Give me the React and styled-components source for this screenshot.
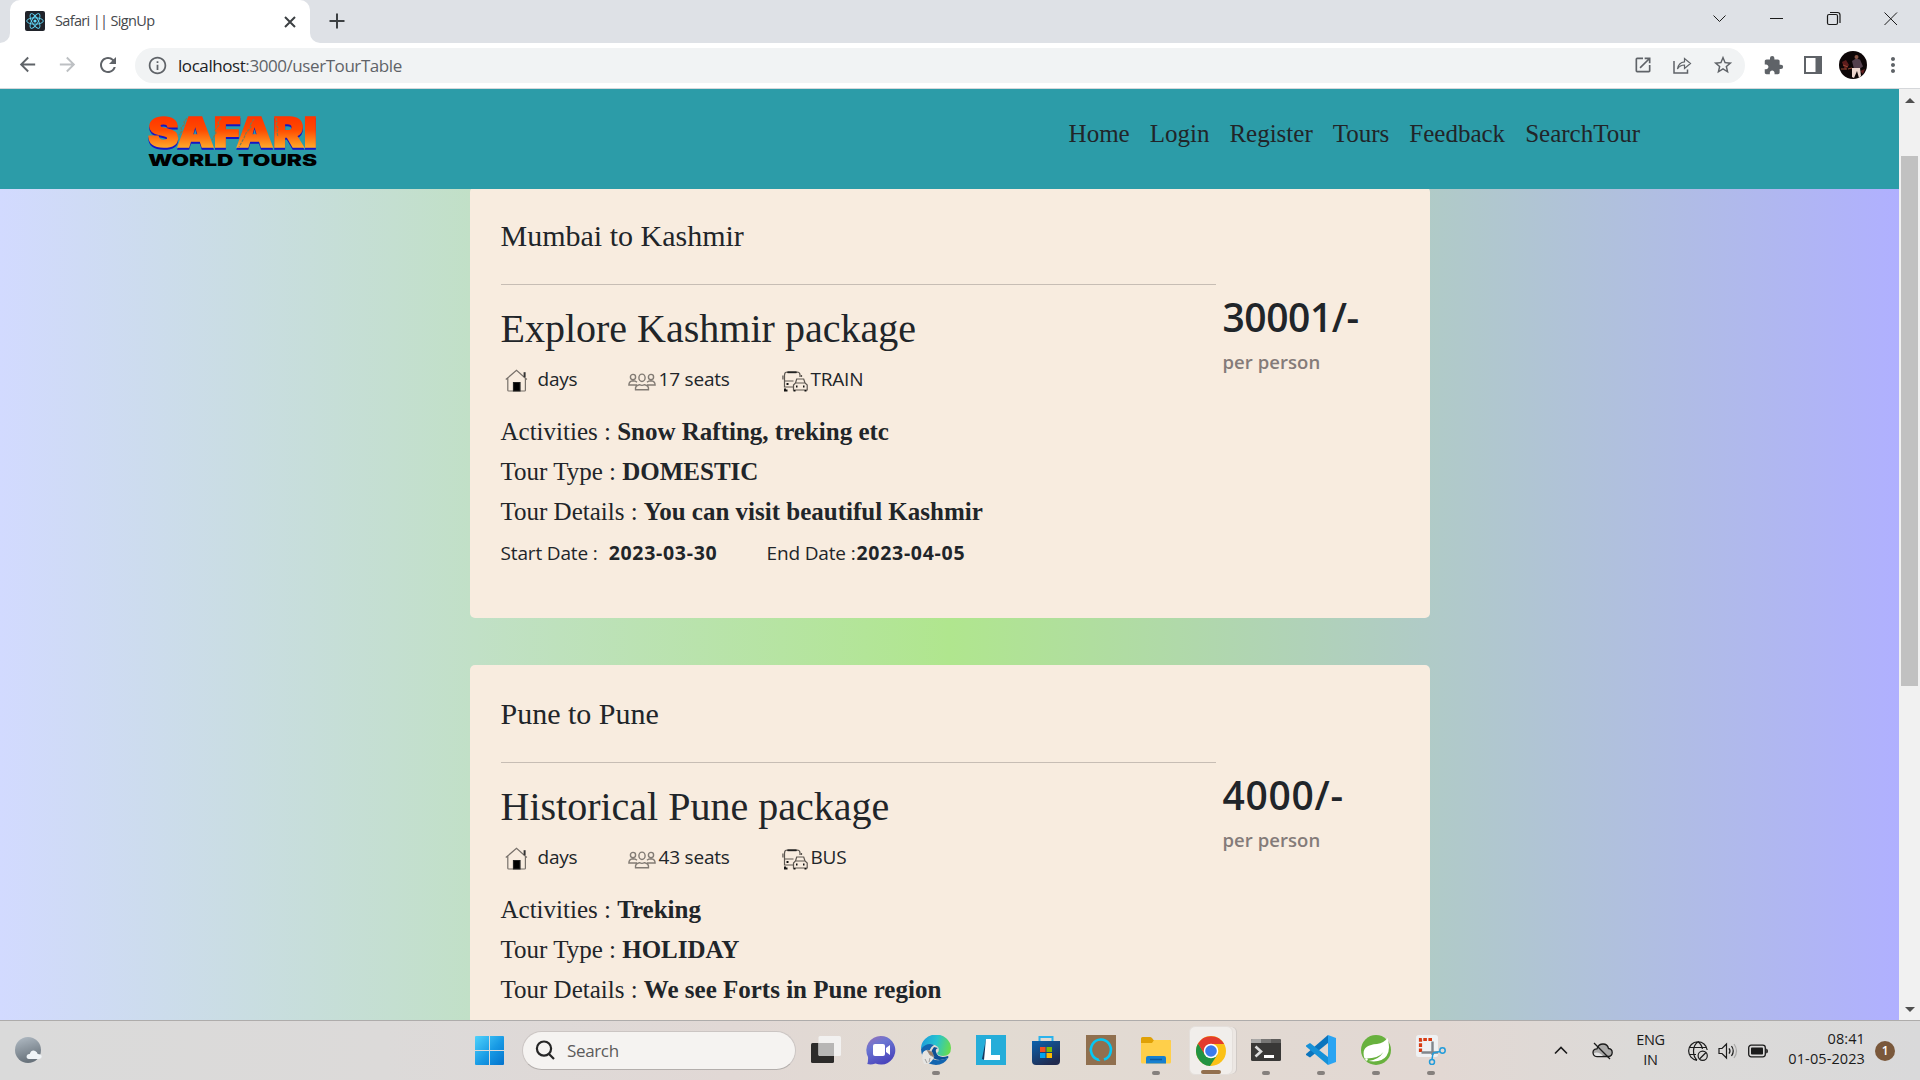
import React from "react";
import styled, { createGlobalStyle } from "styled-components";
import { MdOpenInNew, MdStarBorder, MdExtension, MdRefresh, MdArrowBack, MdArrowForward, MdInfoOutline, MdMoreVert } from "react-icons/md";

const sans = `"Open Sans", "Noto Sans", sans-serif`;
const serif = `"Liberation Serif", serif`;

const Global = createGlobalStyle`
  * { box-sizing: border-box; }
  body { margin: 0; overflow: hidden; }
  svg { display: block; flex: none; }
`;

const Screen = styled.div`
  width: 1920px;
  height: 1080px;
  display: flex;
  flex-direction: column;
  overflow: hidden;
  font-family: ${sans};
  color: #212529;
`;

/* ---------- browser chrome ---------- */
const TabStrip = styled.div`
  height: 43px;
  flex: none;
  background: #dee1e6;
  display: flex;
  align-items: stretch;
`;
const TabEdge = styled.div`
  width: 10px;
  background: #fff;
  &::before {
    content: "";
    display: block;
    height: 43px;
    background: #dee1e6;
    border-radius: ${(p) => (p.$left ? "0 0 10px 0" : "0 0 0 10px")};
  }
`;
const Tab = styled.div`
  width: 300px;
  height: 43px;
  padding: 0 14px 9px 15px;
  background: #fff;
  border-radius: 10px 10px 0 0;
  display: flex;
  align-items: center;
`;
const Favicon = styled.span`
  padding-top: 8px;
`;
const TabTitle = styled.span`
  flex: 1;
  margin-left: 10px;
  padding-top: 8px;
  font-size: 14.5px;
  line-height: 20px;
  letter-spacing: -0.65px;
  color: #45484c;
`;
const TabClose = styled.span`
  padding-top: 9px;
`;
const NewTab = styled.div`
  padding: 13px 0 0 9px;
`;
const WindowButtons = styled.div`
  margin-left: auto;
  padding: 11px 21px 0 0;
  display: flex;
  gap: 41px;
`;
const Toolbar = styled.div`
  height: 46px;
  flex: none;
  padding: 5px 0 6px 16px;
  background: #fff;
  border-bottom: 1px solid #d5d7da;
  display: flex;
  align-items: center;
  color: #5f6368;
`;
const NavIcons = styled.div`
  width: 119px;
  display: flex;
  gap: 17px;
`;
const Omnibox = styled.div`
  width: 1610px;
  height: 35px;
  padding: 0 11px 0 12px;
  border-radius: 18px;
  background: #f1f3f4;
  display: flex;
  align-items: center;
`;
const Url = styled.span`
  margin-left: 10px;
  padding-top: 1px;
  flex: 1;
  font-size: 17px;
  line-height: 24px;
  letter-spacing: -0.43px;
  color: #5f6368;
`;
const Host = styled.span`
  color: #202124;
`;
const OmniActions = styled.div`
  display: flex;
  align-items: center;
  gap: 20px;
`;
const ToolActions = styled.div`
  flex: 1;
  padding-left: 8px;
  display: grid;
  grid-template-columns: repeat(4, 40px);
  place-items: center;
`;

/* ---------- page ---------- */
const Viewport = styled.div`
  height: 931px;
  flex: none;
  display: flex;
`;
const Page = styled.div`
  width: 1899px;
  display: flex;
  flex-direction: column;
  overflow: hidden;
  background: linear-gradient(90deg, #d2daff 0%, #b0e68e 50%, #b0b0ff 100%);
`;
const Header = styled.header`
  height: 100px;
  flex: none;
  padding: 0 259px 0 144px;
  background: #2c9ca8;
  display: flex;
  justify-content: space-between;
  z-index: 1;
`;
const LogoWrap = styled.div`
  padding-top: 4px;
`;
const Menu = styled.nav`
  padding-top: 30px;
  display: flex;
  gap: 20px;
  font: 25px/30px ${serif};
`;
const Cards = styled.main`
  flex: 1;
  min-height: 0;
  margin-top: -2px;
  display: flex;
  flex-direction: column;
  align-items: center;
  gap: 47px;
`;
const Card = styled.article`
  width: 960px;
  height: 431px;
  flex: none;
  padding: 31px 31px 0;
  border-radius: 5px;
  background: #f8ecdf;
  display: flex;
`;
const Details = styled.div`
  width: 715px;
`;
const Route = styled.h4`
  margin: 0;
  padding-bottom: 30px;
  border-bottom: 1px solid #c7bdb4;
  font: 400 30px/36px ${serif};
`;
const PackageName = styled.h2`
  margin: 20px 0 11px;
  font: 400 40px/48px ${serif};
`;
const MetaRow = styled.div`
  height: 30px;
  margin-bottom: 23px;
  display: flex;
`;
const Meta = styled.div`
  width: ${(p) => p.$w}px;
  padding-left: ${(p) => p.$pad}px;
  display: flex;
  font-size: 19px;
  line-height: 30px;
  letter-spacing: -0.2px;
`;
const MetaIcon = styled.span`
  padding-top: ${(p) => p.$top}px;
`;
const MetaText = styled.span`
  margin-left: ${(p) => p.$gap}px;
`;
const Fact = styled.p`
  margin: 0 0 10px;
  font: 400 25px/30px ${serif};
`;
const Dates = styled.div`
  display: flex;
  padding-top: 1px;
  font-size: 19px;
  line-height: 30px;
  letter-spacing: -0.15px;
`;
const DateItem = styled.div`
  width: ${(p) => p.$w}px;
  display: flex;
  gap: ${(p) => p.$gap}px;
  white-space: nowrap;
`;
const Strong = styled.b`
  font-size: 19.5px;
  letter-spacing: 0.7px;
`;
const PriceCol = styled.div`
  padding: 75px 0 0 7px;
`;
const Price = styled.div`
  font-size: 39px;
  font-weight: 600;
  line-height: 48px;
  letter-spacing: ${(p) => p.$track}px;
`;
const PerPerson = styled.div`
  margin-top: 6px;
  font-size: 18.5px;
  font-weight: 600;
  line-height: 30px;
  letter-spacing: 0.05px;
  color: #847b79;
`;
const Scrollbar = styled.div`
  width: 21px;
  padding: 9px 0 8px;
  background: #f1f1f1;
  display: flex;
  flex-direction: column;
  align-items: center;
`;
const Arrow = styled.div`
  width: 0;
  height: 0;
  border: 5px solid transparent;
  border-top: ${(p) => (p.$down ? "5px solid #505050" : "0")};
  border-bottom: ${(p) => (p.$down ? "0" : "5px solid #505050")};
`;
const Thumb = styled.div`
  width: 17px;
  height: 530px;
  margin: 53px 0 auto;
  background: #c1c1c1;
`;

/* ---------- taskbar ---------- */
const Taskbar = styled.footer`
  height: 60px;
  flex: none;
  padding: 0 25px 0 14px;
  border-top: 1px solid #aeacab;
  background: linear-gradient(90deg, #dadada 0%, #dcdad9 20%, #e1d8d5 38%, #e2dbd2 50%, #e2d8d3 75%, #dcdad8 85%, #d9d9da 100%);
  display: flex;
  align-items: center;
`;
const Weather = styled.div`
  width: 461px;
  padding-bottom: 2px;
`;
const SearchBox = styled.div`
  width: 274px;
  height: 39px;
  margin: -1px 2px 0 18px;
  padding-left: 12px;
  border: 1px solid #cbc5c3;
  border-bottom-color: #b3aeac;
  border-radius: 20px;
  background: #f5f3f1;
  display: flex;
  align-items: center;
  gap: 12px;
  font-size: 17px;
  letter-spacing: -0.35px;
  color: #5c5b5a;
`;
const Apps = styled.div`
  display: flex;
`;
const AppButton = styled.div`
  width: 55px;
  height: 59px;
  padding: 14px 0 5px;
  display: flex;
  flex-direction: column;
  align-items: center;
  justify-content: space-between;
`;
const ActiveApp = styled(AppButton)`
  width: 44px;
  height: 49px;
  margin: 5px 5px 5px 6px;
  padding: 9px 0 0;
  border: 1px solid #e4dfdb;
  border-radius: 6px;
  background: #f1eeeb;
  box-shadow: 4px 0 0 -1px #ece7e3, 5px 0 0 -1px #cfc9c5;
`;
const Indicator = styled.i`
  width: ${(p) => (p.$state === "active" ? 20 : 8)}px;
  height: 4px;
  flex: none;
  border-radius: 2px;
  background: ${(p) => ({ none: "transparent", active: "#93704f", open: "#85807d" })[p.$state]};
`;
const Tray = styled.div`
  margin-left: auto;
  display: flex;
  align-items: center;
  font-size: 14.5px;
  line-height: 20px;
  letter-spacing: -0.3px;
  color: #1b1b1b;
`;
const CloudSlot = styled.div`
  margin-left: 24px;
`;
const Lang = styled.div`
  width: 75px;
  padding-bottom: 2px;
  text-align: center;
`;
const Clock = styled.div`
  width: 87px;
  margin: 0 10px;
  padding-bottom: 3px;
  text-align: right;
  letter-spacing: 0.1px;
`;
const Badge = styled.div`
  width: 20px;
  height: 20px;
  border-radius: 50%;
  background: #7a583b;
  color: #fff;
  font-size: 12px;
  font-weight: 600;
  text-align: center;
`;
const Quick = styled.div`
  display: flex;
  align-items: center;
  gap: 10px;
`;

/* ---------- drawings ---------- */
const ReactIcon = () => (
  <svg width="20" height="20" viewBox="0 0 20 20">
    <rect width="20" height="20" rx="2" fill="#20232a" />
    <g fill="none" stroke="#61dafb" strokeWidth="0.9">
      <ellipse cx="10" cy="10" rx="8.3" ry="3.2" />
      <ellipse cx="10" cy="10" rx="8.3" ry="3.2" transform="rotate(60 10 10)" />
      <ellipse cx="10" cy="10" rx="8.3" ry="3.2" transform="rotate(120 10 10)" />
    </g>
    <circle cx="10" cy="10" r="1.6" fill="#61dafb" />
  </svg>
);
const Line = ({ w, h, d, sw = 1, color = "#1b1b1b" }) => (
  <svg width={w} height={h} viewBox={`0 0 ${w} ${h}`} fill="none" stroke={color} strokeWidth={sw}>
    <path d={d} />
  </svg>
);
const SafariLogo = () => (
  <svg width="178" height="84" viewBox="0 -20 178 84">
    <defs>
      <linearGradient id="fire" gradientUnits="userSpaceOnUse" x1="0" y1="4" x2="0" y2="36">
        <stop offset="0" stopColor="#ff3500" />
        <stop offset="0.4" stopColor="#ff4a00" />
        <stop offset="1" stopColor="#ffb02c" />
      </linearGradient>
    </defs>
    <g style={{ filter: "drop-shadow(0 2px 0 #1616c4)" }}>
      <text x="4" y="34.3" fontFamily="Inter, sans-serif" fontWeight="900" fontSize="40.5" textLength="169" lengthAdjust="spacingAndGlyphs" fill="url(#fire)" stroke="url(#fire)" strokeWidth="1.6">SAFARI</text>
    </g>
    <path d="M43 5l-3 4 1 2-4 4 1 3-3 4M77 5l-3 5 1 2-4 5 1 3-4 7M110 6l-4 6 1 2-5 6-2 5-5 9M132 5l1 4-1 3 2 3-1 4 1 5" fill="none" stroke="#7d7a52" strokeWidth="1.2" strokeDasharray="3 1" />
    <text x="4" y="52.6" fontFamily="Inter, sans-serif" fontWeight="900" fontSize="16" textLength="169" lengthAdjust="spacingAndGlyphs" fill="#000">WORLD TOURS</text>
  </svg>
);
const House = () => (
  <svg width="23" height="23" viewBox="0 0 23 23" fill="none" stroke="#77706a" strokeWidth="1.2">
    <path d="M.8 10.5L11.5 1.4l10.4 9.1M2.8 9v12.2q0 .8 1 .8h15.600q1 0 1-.8V9" />
    <path d="M19.600 3.200v5" stroke="#333" strokeWidth="2" />
    <path d="M8.500 13.500h6.500V22H8.500z" fill="#000" stroke="#222" />
  </svg>
);
const People = () => (
  <svg width="28" height="18" viewBox="0 0 28 18" fill="none" stroke="#827b74" strokeWidth="1.4">
    <circle cx="5" cy="4" r="2.600" />
    <circle cx="23" cy="4" r="2.600" />
    <ellipse cx="14" cy="4.800" rx="3.100" ry="3.700" />
    <path d="M9 12H.9q0-3.800 4.100-4.200 2.500 0 4 1.500M19 12h8.100q0-3.800-4.100-4.200-2.500 0-4 1.500M7.500 16.700q-.5-4.300 4-5 2.500 1.300 5 0 4.500.7 4 5z" />
  </svg>
);
const Bus = () => (
  <svg width="26" height="22" viewBox="0 0 26 22" fill="none" stroke="#5c5650" strokeWidth="1.2">
    <path d="M11 17H2.500V5q0-3 3-3h9.500q3 0 3 3v2M2.500 11h9M.9 5.500v4M19.500 5v2M5 2.500h10" />
    <path d="M11.500 20v-5l2-2 1.200-4h7l1.300 4 2.200 2v5zM14 13h9" />
    <path d="M4.500 14h2M14 16.500h1.500M21 16.500h1.500M3 18.500v2h2.500M12.500 20v1.500M23.500 20v1.500" stroke="#111" strokeWidth="2" />
    <path d="M5.500 2.300h9" stroke="#222" strokeWidth="1.800" />
  </svg>
);
const Share = () => (
  <svg width="19" height="17" viewBox="0 0 19 17" fill="none" stroke="#5f6368" strokeWidth="1.500">
    <path d="M1 4v12h13.500v-3.500" />
    <path d="M4.500 12Q5.500 5.300 11.500 4.800V1.500l6 5-6 5V8Q7 8 4.500 12z" strokeWidth="1.200" />
  </svg>
);
const SidePanel = () => (
  <svg width="18" height="18" viewBox="0 0 18 18">
    <path d="M0 0h18v18H0z" fill="#5f6368" />
    <path d="M2 2h9.500v14H2z" fill="#fff" />
  </svg>
);
const Avatar = () => (
  <svg width="28" height="28" viewBox="0 0 28 28">
    <circle cx="14" cy="14" r="14" fill="#0d0607" />
    <path d="M3 11l4-2 3 5-4 5zM21 20l5-2-2 5z" fill="#5e1c1c" />
    <path d="M4 14l5 2M9 18l4-1M2 18h6" stroke="#9a4a35" strokeWidth="1" />
    <path d="M13 10l4-2.500 4 1 3 7-3 2-6 .5z" fill="#54404d" />
    <circle cx="17.500" cy="6" r="2" fill="#8a5748" />
    <path d="M13 17h8l1 8-2 2-2-7-3 7-2-1z" fill="#ecd6ce" />
  </svg>
);
const Moon = () => (
  <svg width="29" height="28" viewBox="0 0 29 28">
    <defs><linearGradient id="moon" x1="0" y1="0" x2="0.300" y2="1"><stop stopColor="#b3bdc6" /><stop offset="1" stopColor="#69737c" /></linearGradient></defs>
    <circle cx="14" cy="14" r="13" fill="url(#moon)" />
    <path d="M15 23q-3-.5-2.300-3.300.8-2 3-1.600 1.500-4.500 5.500-3.200 2 .7 2.500 3.200 4 0 4 2.700 0 2-2.700 2.200z" fill="#f0f4f7" />
  </svg>
);
const WinLogo = () => (
  <svg width="29" height="29" viewBox="0 0 29 29">
    <defs><linearGradient id="win" x1="0" y1="0" x2="1" y2="1"><stop stopColor="#4fd2fb" /><stop offset="0.550" stopColor="#1799e4" /><stop offset="1" stopColor="#0372cc" /></linearGradient></defs>
    <path d="M1 0h13v14H0V1q0-1 1-1zM15 0h13q1 0 1 1v13H15zM0 15h14v14H1q-1 0-1-1zM15 15h14v13q0 1-1 1H15z" fill="url(#win)" />
  </svg>
);
const TaskView = () => (
  <svg width="30" height="30" viewBox="0 0 30 30">
    <rect x="0" y="8" width="23" height="20" rx="1.500" fill="#2c2b2a" />
    <rect x="7.500" y="1" width="22.500" height="20" rx="1.500" fill="#f2f1f0" />
    <path d="M7.500 8H23v13H9q-1.500 0-1.500-1.500z" fill="#b7b6b5" />
  </svg>
);
const Chat = () => (
  <svg width="30" height="30" viewBox="0 0 30 30">
    <defs><linearGradient id="chat" x1="0" y1="0" x2="0.500" y2="1"><stop stopColor="#9a70b5" /><stop offset="0.400" stopColor="#6a75d2" /><stop offset="1" stopColor="#4b46bd" /></linearGradient></defs>
    <path d="M15 1a14.300 14.300 0 1 1-5.500 27.500Q5 30 1.300 29q1-3 .7-7A14.300 14.300 0 0 1 15 1z" fill="url(#chat)" />
    <rect x="7" y="9" width="12" height="12" rx="2" fill="#fff" />
    <path d="M20 13l4-3v10l-4-3z" fill="#fff" />
  </svg>
);
const Edge = () => (
  <svg width="30" height="30" viewBox="0 0 30 30">
    <defs>
      <linearGradient id="edgeTop" x1="0" y1="0.300" x2="1" y2="0.500"><stop stopColor="#1c9cdc" /><stop offset="0.500" stopColor="#27c3cf" /><stop offset="1" stopColor="#67dc4f" /></linearGradient>
    </defs>
    <path d="M0 14A15 14 0 0 1 30 13q0 8-8 8-5 0-6-3 3-2 1-6Q11 6 0 14z" fill="url(#edgeTop)" />
    <path d="M0 14Q6 7 13 10 6 14 10 22q4 6 17 1-4 7-12 7Q1 29 0 14z" fill="#1265b0" />
    <path d="M13 12q-5 6-1 11 6 4 15 0 1-1 0-2-10 3-12-4-1-3 2-4z" fill="#0c4f96" />
    <path d="M1 20q1-5 6-5 4 0 4 4l2 3q-3 8-10 7-2-4-2-9z" fill="#e6e5e2" />
    <path d="M6 15l5 2 2 5-4-2zM4 24l2 4M9 23l-1 4" fill="#9d7a60" stroke="#8d8d8d" strokeWidth=".8" />
  </svg>
);
const LTile = () => (
  <svg width="30" height="30" viewBox="0 0 30 30">
    <path d="M0 0h30v30H0z" fill="#25add9" />
    <path d="M10 4L6 24l3 1z" fill="#16385f" />
    <path d="M10 4h5v16h9v5H8z" fill="#fff" />
  </svg>
);
const Store = () => (
  <svg width="30" height="30" viewBox="0 0 30 30">
    <defs><linearGradient id="store" x1="0" y1="0" x2="0.600" y2="1"><stop stopColor="#0b62ae" /><stop offset="1" stopColor="#212b4f" /></linearGradient></defs>
    <path d="M8.500 7V2h13v5" fill="none" stroke="#2cb3ec" strokeWidth="2" />
    <path d="M1 6h28v20q0 4-4 4H5q-4 0-4-4z" fill="url(#store)" />
    <path d="M9 12h5.500v5H9z" fill="#f25022" /><path d="M15.500 12H21v5h-5.500z" fill="#7fba00" />
    <path d="M9 18h5.500v5H9z" fill="#00a4ef" /><path d="M15.500 18H21v5h-5.500z" fill="#ffb900" />
  </svg>
);
const Alexa = () => (
  <svg width="30" height="30" viewBox="0 0 30 30">
    <path d="M0 0h30v30H0z" fill="#90704f" />
    <path d="M12.500 24.800A10 10.300 0 1 1 18 24.600" fill="none" stroke="#05c8f5" strokeWidth="2.600" />
    <path d="M11 23.500q2 .2 3.500 2.500-3 .5-4-1z" fill="#05c8f5" />
  </svg>
);
const Folder = () => (
  <svg width="30" height="30" viewBox="0 0 30 30">
    <path d="M0 3.500Q0 2 1.500 2H9q1 0 2 1l1.500 2H28q2 0 2 2v3H0z" fill="#e0a106" />
    <path d="M0 8h11l2-3h15.500Q30 5 30 6.500V27q0 1.500-1.500 1.500h-27Q0 28.500 0 27z" fill="#ffcf4a" />
    <path d="M5 28.500V23q0-2 2-2h16q2 0 2 2v5.500z" fill="#1780cf" />
    <path d="M9 24.500h12" stroke="#0c5a9e" strokeWidth="1.500" />
  </svg>
);
const Chrome = () => (
  <svg width="30" height="30" viewBox="0 0 30 30">
    <circle cx="15" cy="15" r="15" fill="#fbc116" />
    <path d="M2 7.500A15 15 0 0 0 14 30L21.500 18.500 9 18z" fill="#229342" />
    <path d="M2 7.500A15 15 0 0 1 28.100 8H15L8.700 18.600z" fill="#e33b2e" />
    <circle cx="15" cy="15" r="7.300" fill="#fff" />
    <circle cx="15" cy="15" r="5.800" fill="#3b7bec" />
  </svg>
);
const Terminal = () => (
  <svg width="30" height="30" viewBox="0 0 30 30">
    <rect y="4" width="30" height="22" rx="1.500" fill="#393837" />
    <path d="M1.500 4H10v4H0V5.500Q0 4 1.500 4z" fill="#a9a8a7" /><path d="M10 4h10v4H10z" fill="#777675" /><path d="M20 4h8.500Q30 4 30 5.500V8H20z" fill="#5c5b5a" />
    <path d="M4.500 11.500l5.500 5-5.500 5" fill="none" stroke="#dcdcdc" strokeWidth="2.600" /><path d="M13 20h10v3H13z" fill="#fff" />
  </svg>
);
const VSCode = () => (
  <svg width="30" height="30" viewBox="0 0 30 30">
    <path d="M22 0l8 3v24l-8 3z" fill="#2aa4f2" />
    <path d="M22 0v8L4 22.500 0 20v-1z" fill="#0b74bd" />
    <path d="M22 30v-8L4 8 0 10.500v1z" fill="#1691d8" />
  </svg>
);
const Spring = () => (
  <svg width="30" height="30" viewBox="0 0 30 30">
    <circle cx="15" cy="15" r="15" fill="#68b13e" />
    <path d="M26.500 3q3.500 12-1 18-5 7-18 5 10-1 15-9Q17 24 3.500 23.500-1 10 16 9q7-1 10.500-6z" fill="#fff" />
    <circle cx="5.500" cy="24.500" r="1.200" fill="#fff" />
  </svg>
);
const Snip = () => (
  <svg width="30" height="30" viewBox="0 0 30 30">
    <rect width="22" height="22" rx="2.500" fill="#eff1f3" />
    <path d="M16 4.500H4.500V17" fill="none" stroke="#d83b12" strokeWidth="3.200" strokeDasharray="3.600 1.500" />
    <path d="M16.500 6.500V20M5.500 17.500H22" stroke="#81868c" strokeWidth="2.400" />
    <circle cx="26.500" cy="15.500" r="2.700" fill="none" stroke="#239cda" strokeWidth="1.500" />
    <circle cx="16" cy="27" r="2.500" fill="none" stroke="#239cda" strokeWidth="1.500" />
    <path d="M17 18l7-1.500M17 18l-1 6.500" stroke="#239cda" strokeWidth="1.500" />
  </svg>
);
const CloudOff = () => (
  <svg width="21" height="18" viewBox="0 0 21 18" fill="none" stroke="#1b1b1b" strokeWidth="1.300">
    <path d="M5 14.500Q1 14 1 10.500 1 7 5 6.800 6.500 2 11 2q4.500 0 5.500 4.500 3.700.5 3.700 4t-3.700 4z" fill="#aaa9a8" />
    <path d="M2 11q5-2 9 3H5q-3 0-3-3z" fill="#e4e4e4" stroke="none" />
    <path d="M2 1l16 16" />
  </svg>
);
const Globe = () => (
  <svg width="20" height="20" viewBox="0 0 20 20" fill="none" stroke="#1b1b1b" strokeWidth="1.200">
    <path d="M9 19.300A9.300 9.300 0 1 1 19.200 9M1.500 6.500h17M1.500 13.500H8M10 .7Q5.500 4 5.500 10T9 19M10 .7q4 3 4.400 7.300" />
    <circle cx="14.700" cy="14.700" r="4.600" /><path d="M11.500 18l6.500-6.500" />
  </svg>
);
const Speaker = () => (
  <svg width="20" height="18" viewBox="0 0 20 18" fill="none" stroke="#1b1b1b" strokeWidth="1.200">
    <path d="M1 6.500h3L8.500 2v14L4 11.500H1zM11 6.300q2 2.700 0 5.400M13.500 4q3.500 5 0 10" />
    <path d="M16 2q5 7 0 14" stroke="#a9a8a7" />
  </svg>
);
const Battery = () => (
  <svg width="20" height="14" viewBox="0 0 20 14">
    <rect x=".7" y="1.200" width="16.600" height="11.600" rx="2.500" fill="none" stroke="#1b1b1b" strokeWidth="1.300" />
    <rect x="3" y="3.500" width="12" height="7" rx=".8" fill="#1b1b1b" /><path d="M18.200 4.500q1.800.5 1.800 2.500t-1.800 2.500z" fill="#1b1b1b" />
  </svg>
);

const menu = ["Home", "Login", "Register", "Tours", "Feedback", "SearchTour"];
const tours = [
  { route: "Mumbai to Kashmir", name: "Explore Kashmir package", seats: "17 seats", by: "TRAIN", activities: "Snow Rafting, treking etc", type: "DOMESTIC", details: "You can visit beautiful Kashmir", start: "2023-03-30", end: "2023-04-05", price: "30001/-", track: -0.45 },
  { route: "Pune to Pune", name: "Historical Pune package", seats: "43 seats", by: "BUS", activities: "Treking", type: "HOLIDAY", details: "We see Forts in Pune region", price: "4000/-", track: 0.7 },
];
const apps = [
  [TaskView, "none"], [Chat, "none"], [Edge, "open"], [LTile, "none"], [Store, "none"], [Alexa, "none"],
  [Folder, "open"], [Chrome, "active"], [Terminal, "open"], [VSCode, "open"], [Spring, "open"], [Snip, "open"],
];

const TourCard = ({ tour }) => (
  <Card>
    <Details>
      <Route>{tour.route}</Route>
      <PackageName>{tour.name}</PackageName>
      <MetaRow>
        <Meta $w={127} $pad={4}><MetaIcon $top={5}><House /></MetaIcon><MetaText $gap={10}>days</MetaText></Meta>
        <Meta $w={154} $pad={0}><MetaIcon $top={9}><People /></MetaIcon><MetaText $gap={3}>{tour.seats}</MetaText></Meta>
        <Meta $w={150} $pad={0}><MetaIcon $top={6}><Bus /></MetaIcon><MetaText $gap={3}>{tour.by}</MetaText></Meta>
      </MetaRow>
      <Fact>Activities : <b>{tour.activities}</b></Fact>
      <Fact>Tour Type : <b>{tour.type}</b></Fact>
      <Fact>Tour Details : <b>{tour.details}</b></Fact>
      {tour.start && (
        <Dates>
          <DateItem $w={266} $gap={11}>Start Date : <Strong>{tour.start}</Strong></DateItem>
          <DateItem $w={260} $gap={1}>End Date :<Strong>{tour.end}</Strong></DateItem>
        </Dates>
      )}
    </Details>
    <PriceCol>
      <Price $track={tour.track}>{tour.price}</Price>
      <PerPerson>per person</PerPerson>
    </PriceCol>
  </Card>
);

export default function App() {
  return (
    <Screen>
      <Global />
      <TabStrip>
        <TabEdge $left />
        <Tab>
          <Favicon><ReactIcon /></Favicon>
          <TabTitle>Safari || SignUp</TabTitle>
          <TabClose><Line w={12} h={12} sw={2} color="#3c4043" d="M1 1l10 10M11 1L1 11" /></TabClose>
        </Tab>
        <TabEdge />
        <NewTab><Line w={16} h={16} sw={2} color="#3c4043" d="M8 .5v15M.5 8h15" /></NewTab>
        <WindowButtons>
          <Line w={16} h={16} d="M1.500 4.500l6 6 6-6" />
          <Line w={16} h={16} d="M1 7.500h13" />
          <Line w={16} h={16} sw={1.2} d="M1.500 5q0-1.500 1.500-1.500h7q1.500 0 1.500 1.500v7q0 1.500-1.500 1.500H3q-1.500 0-1.500-1.500zM4 1.500h7.500q2.500 0 2.500 2.500V12" />
          <Line w={16} h={16} d="M1.500 1.500l12.500 12.500M14 1.500L1.500 14" />
        </WindowButtons>
      </TabStrip>
      <Toolbar>
        <NavIcons>
          <MdArrowBack size={23} /><MdArrowForward size={23} color="#bdc0c3" /><MdRefresh size={24} />
        </NavIcons>
        <Omnibox>
          <MdInfoOutline size={21} />
          <Url><Host>localhost</Host>:3000/userTourTable</Url>
          <OmniActions>
            <MdOpenInNew size={20} /><Share /><MdStarBorder size={22} />
          </OmniActions>
        </Omnibox>
        <ToolActions>
          <MdExtension size={21} /><SidePanel /><Avatar /><MdMoreVert size={24} />
        </ToolActions>
      </Toolbar>
      <Viewport>
        <Page>
          <Header>
            <LogoWrap><SafariLogo /></LogoWrap>
            <Menu>{menu.map((m) => <span key={m}>{m}</span>)}</Menu>
          </Header>
          <Cards>{tours.map((t) => <TourCard key={t.name} tour={t} />)}</Cards>
        </Page>
        <Scrollbar><Arrow /><Thumb /><Arrow $down /></Scrollbar>
      </Viewport>
      <Taskbar>
        <Weather><Moon /></Weather>
        <WinLogo />
        <SearchBox>
          <Line w={20} h={20} sw={2.2} color="#262626" d="M9 1.500a7 7 0 1 1 0 14.200a7 7 0 1 1 0-14.200M14 14l5 5" />
          Search
        </SearchBox>
        <Apps>
          {apps.map(([Icon, state], i) => {
            const Button = state === "active" ? ActiveApp : AppButton;
            return <Button key={i}><Icon /><Indicator $state={state} /></Button>;
          })}
        </Apps>
        <Tray>
          <Line w={14} h={9} sw={1.6} d="M1 7.500l6-6 6 6" />
          <CloudSlot><CloudOff /></CloudSlot>
          <Lang>ENG<br />IN</Lang>
          <Quick><Globe /><Speaker /><Battery /></Quick>
          <Clock>08:41<br />01-05-2023</Clock>
          <Badge>1</Badge>
        </Tray>
      </Taskbar>
    </Screen>
  );
}
